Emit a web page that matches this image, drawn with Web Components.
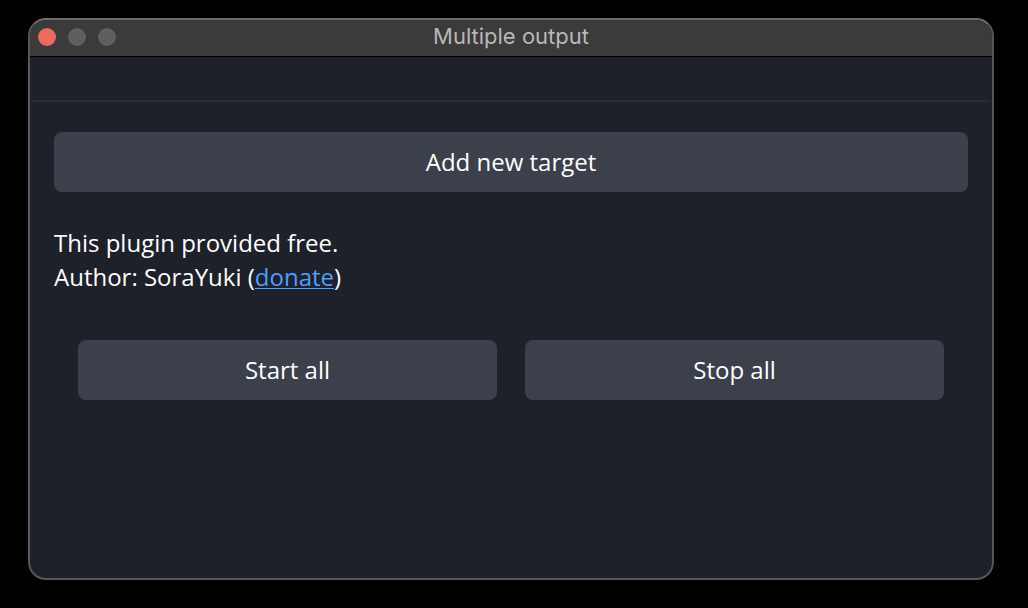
<!DOCTYPE html>
<html lang="en">
<head>
<meta charset="utf-8">
<title>Multiple output</title>
<style>
html, body { margin: 0; height: 100%; background: #000; }
body { font: 24px/34px "Open Sans", sans-serif; color: #fefefe; }
</style>
</head>
<body>
<output-app></output-app>
<script>
const define = (name, html) => customElements.define(name, class extends HTMLElement {
  constructor() {
    super();
    this.attachShadow({ mode: "open" }).innerHTML = html;
  }
});

define("title-bar", `
<style>
:host { display: grid; grid-template-columns: 1fr auto 1fr; align-items: start; height: 36px; background: #3b3b3b; border-bottom: 1px solid #000; }
.lights { display: flex; gap: 12px; padding: 8px 0 0 8px; }
button { width: 18px; height: 18px; padding: 0; border: 0; border-radius: 50%; background: #5f5f5f; }
.close { background: #ed6a5e; }
h1 { margin: 0; font: 22px/32px Inter, sans-serif; color: #b8b8b8; }
</style>
<div class="lights">
<button class="close" aria-label="Close"></button>
<button aria-label="Minimize"></button>
<button aria-label="Zoom"></button>
</div>
<h1><slot></slot></h1>`);

define("push-button", `
<style>
:host { display: flex; }
button { flex: 1; height: 60px; padding: 0; border: 0; border-radius: 8px; background: #3c404b; color: inherit; font: inherit; }
</style>
<button type="button"><slot></slot></button>`);

define("plugin-credit", `
<style>
:host { display: block; }
p { margin: 0; }
a { color: #4c9eff; text-decoration-thickness: 1px; text-underline-offset: 2px; }
</style>
<p>This plugin provided free.</p>
<p>Author: SoraYuki (<a href="#donate">donate</a>)</p>`);

define("output-app", `
<style>
:host { display: flex; box-sizing: border-box; min-height: 100%; padding: 18px 34px 28px 28px; }
.window { flex: 1; display: flex; flex-direction: column; border: 2px solid #55565b; border-top-color: #6c6c6c; border-radius: 18px; overflow: hidden; background: #1f212a; }
.strip { height: 43px; margin: 0 2px; border-bottom: 2px solid #292c38; }
main { display: flex; flex-direction: column; padding: 30px 24px; }
plugin-credit { margin: 34px 0 46px; }
.actions { display: grid; grid-template-columns: 1fr 1fr; gap: 28px; padding: 0 24px; }
</style>
<div class="window">
<title-bar>Multiple output</title-bar>
<div class="strip"></div>
<main>
<push-button>Add new target</push-button>
<plugin-credit></plugin-credit>
<div class="actions">
<push-button>Start all</push-button>
<push-button>Stop all</push-button>
</div>
</main>
</div>`);
</script>
</body>
</html>
